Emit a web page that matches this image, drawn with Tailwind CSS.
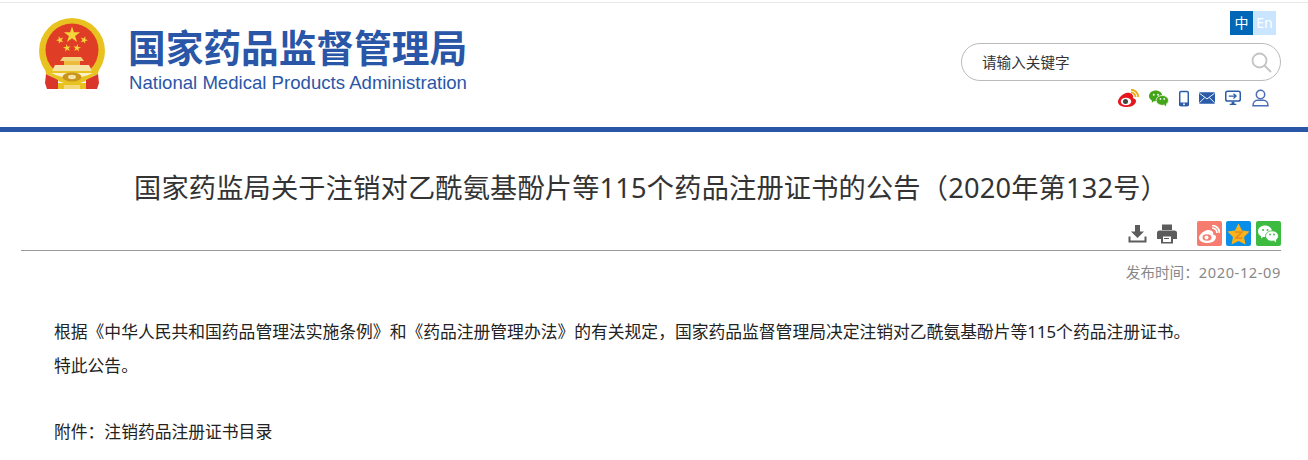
<!DOCTYPE html>
<html lang="zh-CN">
<head>
  <meta charset="UTF-8">
  <meta name="viewport" content="width=device-width, initial-scale=1.0">
  <title>国家药品监督管理局</title>
  <script src="https://cdn.jsdelivr.net/npm/@tailwindcss/browser@4"></script>
</head>
<body class="bg-white overflow-hidden pt-[2px] font-['Noto_Sans','Noto_Sans_CJK_SC',sans-serif] text-[#333]">
  <!-- header -->
  <header class="h-[130px] border-t border-[#e8e8e8] border-b-[5px] border-b-[#2a56a8] flex justify-between">
    <div class="flex items-start pl-[38px] pt-[15px]">
      <!-- national emblem -->
      <svg class="w-[68px] h-[72px]" viewBox="0 0 68 72">
        <defs><polygon id="star" points="0,-10 2.245,-3.09 9.51,-3.09 3.63,1.18 5.88,8.09 0,3.82 -5.88,8.09 -3.63,1.18 -9.51,-3.09 -2.245,-3.09" fill="#f4d63a"/></defs>
        <circle cx="34" cy="33" r="33" fill="#e8c320"/>
        <circle cx="34" cy="32" r="26.500" fill="#e03d27"/>
        <use href="#star" transform="translate(34 17) scale(.85)"/>
        <use href="#star" transform="translate(22 22) scale(.4) rotate(-20)"/>
        <use href="#star" transform="translate(46 22) scale(.4) rotate(20)"/>
        <use href="#star" transform="translate(29 30) scale(.4) rotate(-8)"/>
        <use href="#star" transform="translate(39 30) scale(.4) rotate(8)"/>
        <path d="M25 39 H43 L46 43 H22Z" fill="#f0d37a"/>
        <path d="M26 43 H42 V47 H26Z" fill="#eebc3c"/>
        <path d="M17 47 H51 L54 53 H14Z" fill="#f5e3a8"/>
        <path d="M6 46 Q12 50 15 53 H53 Q56 50 62 46 L60 56 Q34 68 8 56Z" fill="#e8c320"/>
        <path d="M13 55 H55 Q34 65 13 55Z" fill="#fbf0c8"/>
        <path d="M8 56 L20 62 L20 71 L9 71 L7 65Z" fill="#d9352a"/>
        <path d="M60 56 L48 62 L48 71 L59 71 L61 65Z" fill="#d9352a"/>
        <path d="M20 65 H48 V71 H20Z" fill="#e8c320"/>
        <ellipse cx="34" cy="59" rx="9.500" ry="4.500" fill="#c8941c"/>
        <ellipse cx="34" cy="59" rx="4" ry="2.200" fill="#f5e3a8"/>
        <rect x="26" y="67" width="16" height="4" fill="#f3d97a"/>
      </svg>
      <div class="ml-[22px] text-[#2a56a8]">
        <div class="text-[37.7px] leading-[44px] font-bold mt-[6px] whitespace-nowrap font-['Noto_Sans_CJK_SC',sans-serif]">国家药品监督管理局</div>
        <div class="text-[18.6px] leading-[22px] mt-[4px] ml-[1px] whitespace-nowrap font-['Liberation_Sans',sans-serif]">National Medical Products Administration</div>
      </div>
    </div>
    <div class="w-[360px] flex flex-col items-end pr-[27px] pt-[8px]">
      <div class="flex text-[14px] leading-[24px] text-center text-white mr-[5px]">
        <span class="w-[23px] h-[24px] bg-[#0068b7]">中</span>
        <span class="w-[23px] h-[24px] bg-[#c9e5ff]">En</span>
      </div>
      <div class="w-[320px] h-[38px] mt-[8px] rounded-[19px] border border-[#bbb] flex items-center justify-between pl-[20px] pr-[8px] text-[14.6px]">
        <span class="relative top-[1px]">请输入关键字</span>
        <svg class="w-[21px] h-[21px]" viewBox="0 0 21 21" fill="none" stroke="#c4c4c4" stroke-width="1.8"><circle cx="8.5" cy="8.5" r="7"/><path d="M13.5 13.5 L20 20"/></svg>
      </div>
      <div class="flex items-center mt-[5px] h-[24px] pr-[12px]">
        <!-- weibo -->
        <svg class="w-[21px] h-[18px]" viewBox="0 0 21 18"><path d="M8 4 C3 6 0 9.500 0 13 C0 16 4 18 9 18 C15 18 18 14.500 18 12 C18 10 16 9.500 15 9 C16 6 13 3 8 4Z" fill="#e6161e"/><ellipse cx="8" cy="12.500" rx="5.200" ry="3.800" fill="#fff"/><circle cx="7.500" cy="12.500" r="2.500" fill="#444"/><path d="M13 3.500 A4.500 4.500 0 0 1 17.500 8 M13 0.800 A7.200 7.200 0 0 1 20.200 8" fill="none" stroke="#edaa12" stroke-width="1.900"/></svg>
        <!-- wechat -->
        <svg class="w-[20px] h-[17px] ml-[10px]" viewBox="0 0 21 17"><path d="M7 0 C11 0 14 2.500 14 6 C14 9 11 11.500 7 11.500 L5 11.500 L3 13 L3 10.500 C1 9.500 0 8 0 6 C0 2.500 3 0 7 0Z" fill="#45a518"/><ellipse cx="14" cy="10.500" rx="6.500" ry="5.200" fill="#45a518" stroke="#fff" stroke-width="0.800"/><path d="M16 15 L18 17 L18 13Z" fill="#45a518"/><circle cx="5" cy="4.500" r="1" fill="#fff"/><circle cx="9.500" cy="4.500" r="1" fill="#fff"/><circle cx="12" cy="9" r="0.900" fill="#fff"/><circle cx="16" cy="9" r="0.900" fill="#fff"/></svg>
        <!-- phone -->
        <svg class="w-[10px] h-[17px] ml-[10px]" viewBox="0 0 11 17"><rect x="0.800" y="0.800" width="9.400" height="15.400" rx="1.500" fill="#fff" stroke="#2a5caa" stroke-width="1.600"/><rect x="0" y="13" width="11" height="4" rx="1.500" fill="#2a5caa"/><circle cx="5.500" cy="14.800" r="1" fill="#fff"/></svg>
        <!-- mail -->
        <svg class="w-[16px] h-[12px] ml-[10px]" viewBox="0 0 17 12"><rect width="17" height="12" rx="1" fill="#2a5caa"/><path d="M0.500 1 L8.500 7 L16.500 1 M0.500 11 L6 5.500 M16.500 11 L11 5.500" fill="none" stroke="#fff" stroke-width="1"/></svg>
        <!-- screen -->
        <svg class="w-[16px] h-[16px] ml-[10px]" viewBox="0 0 17 16"><rect x="0.800" y="0.800" width="15.400" height="10.400" rx="2" fill="#fff" stroke="#2a5caa" stroke-width="1.600"/><path d="M4 6 L11 6 M9 3.500 L11.800 6 L9 8.500" fill="none" stroke="#2a5caa" stroke-width="1.300"/><path d="M7 12 L10 12 L10 14 L12 14 L12 15.500 L5 15.500 L5 14 L7 14Z" fill="#2a5caa"/></svg>
        <!-- user -->
        <svg class="w-[17px] h-[18px] ml-[11px]" viewBox="0 0 17 17" fill="none" stroke="#4a6db5" stroke-width="1.500"><circle cx="8.500" cy="5" r="4.200"/><path d="M1 16.200 C1 13 3 10.800 5.500 10.800 L11.500 10.800 C14 10.800 16 13 16 16.200Z"/></svg>
      </div>
    </div>
  </header>

  <main class="pl-[21px] pr-[27px]">
    <h1 class="text-center text-[27.2px] leading-[36px] pt-[38px] tracking-[0.2px] text-[#333] whitespace-nowrap">国家药监局关于注销对乙酰氨基酚片等115个药品注册证书的公告（2020年第132号）</h1>

    <div class="flex justify-end items-center h-[25px] mt-[15px]">
      <!-- download -->
      <svg class="w-[19px] h-[19px]" viewBox="0 0 19 19" fill="#5c5c5c"><path d="M7 1 H12 V7.500 H16 L9.500 14 L3 7.500 H7Z"/><path d="M0.500 12.500 H2.500 V16.500 H16.500 V12.500 H18.500 V18.500 H0.500Z"/></svg>
      <!-- print -->
      <svg class="w-[20px] h-[20px] ml-[10px]" viewBox="0 0 20 20" fill="#5c5c5c"><path d="M5 0.500 H15 V6 H5Z"/><path d="M2.500 6.500 H17.500 Q20 6.500 20 9 V15 H16 V19.500 H4 V15 H0 V9 Q0 6.500 2.500 6.500Z"/><rect x="6" y="12.500" width="8" height="5.500" fill="#fff"/><rect x="7" y="14" width="5" height="1" fill="#5c5c5c"/></svg>
      <!-- share weibo -->
      <span class="w-[25px] h-[25px] ml-[20px] rounded-[2px] bg-[#f77c70] flex items-center justify-center">
        <svg class="w-[21px] h-[18px]" viewBox="0 0 21 18"><path d="M8 5 C3 7 0 10 0 13 C0 16 4 18 9 18 C15 18 17 14 17 12 C17 10 15 10 14 9.500 C15 7 13 5 8 5Z" fill="#fff"/><ellipse cx="8" cy="12.500" rx="4.500" ry="3.300" fill="#f77c70"/><circle cx="7.500" cy="12.500" r="2" fill="#fff"/><path d="M13 3 A5 5 0 0 1 18 8 M13 0.500 A7.500 7.500 0 0 1 20.500 8" fill="none" stroke="#fff" stroke-width="1.700"/></svg>
      </span>
      <!-- share qzone -->
      <span class="w-[25px] h-[25px] ml-[4px] rounded-[2px] bg-[#0a8fe8] flex items-center justify-center">
        <svg class="w-[23px] h-[22px]" viewBox="0 0 23 22"><polygon points="11.500,0.500 15,7.500 22.500,8.500 17,14 18.500,21.500 11.500,18 4.500,21.500 6,14 0.500,8.500 8,7.500" fill="#f9b31c"/><path d="M8 9 H15 L9 15 H15.500" fill="none" stroke="#e8891a" stroke-width="1.600"/></svg>
      </span>
      <!-- share wechat -->
      <span class="w-[25px] h-[25px] ml-[5px] rounded-[2px] bg-[#3dbb41] flex items-center justify-center">
        <svg class="w-[21px] h-[18px]" viewBox="0 0 21 17"><path d="M7 0 C11 0 14 2.500 14 6 C14 9 11 11.500 7 11.500 L5 11.500 L3 13 L3 10.500 C1 9.500 0 8 0 6 C0 2.500 3 0 7 0Z" fill="#fff"/><ellipse cx="14" cy="10.500" rx="6.500" ry="5.200" fill="#fff" stroke="#3dbb41" stroke-width="0.800"/><path d="M16 15 L18 17 L18 13Z" fill="#fff"/><circle cx="5" cy="4.500" r="1" fill="#3dbb41"/><circle cx="9.500" cy="4.500" r="1" fill="#3dbb41"/><circle cx="12" cy="9" r="0.900" fill="#3dbb41"/><circle cx="16" cy="9" r="0.900" fill="#3dbb41"/></svg>
      </span>
    </div>

    <div class="border-t border-[#999] mt-[4px] text-right text-[14.6px] leading-[20px] pt-[11px] text-[#888]">发布时间：<span class="tracking-[0.6px]">2020-12-09</span></div>

    <div class="pl-[33px] pr-[34px] pt-[33px] text-[16.8px] leading-[34px] text-[#222]">
      <p>根据《中华人民共和国药品管理法实施条例》和《药品注册管理办法》的有关规定，国家药品监督管理局决定注销对乙酰氨基酚片等115个药品注册证书。</p>
      <p>特此公告。</p>
      <p class="mt-[32px]">附件：注销药品注册证书目录</p>
    </div>
  </main>
</body>
</html>
